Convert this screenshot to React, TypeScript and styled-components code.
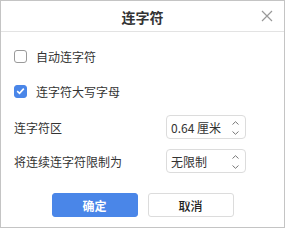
import * as React from 'react';
import styled, { createGlobalStyle } from 'styled-components';

const GlobalStyle = createGlobalStyle`
	html, body {
		margin: 0;
		padding: 0;
		background: #ffffff;
	}
	* {
		box-sizing: border-box;
	}
`;

const Dialog = styled.div`
	width: 285px;
	height: 228px;
	border: 1px solid #c4c4c4;
	background: #fff;
	display: flex;
	flex-direction: column;
	font-family: 'Noto Sans CJK SC', 'Noto Sans', sans-serif;
	color: #333;
`;

const Header = styled.div`
	position: relative;
	height: 31px;
	flex: none;
	display: flex;
	align-items: center;
	justify-content: center;
	border-bottom: 1px solid #e3e3e3;
`;

const Title = styled.div`
	font-size: 14px;
	font-weight: 600;
	color: #333;
	line-height: 1;
	margin-top: 1px;
`;

const CloseButton = styled.button`
	position: absolute;
	right: 10px;
	top: 8px;
	width: 14px;
	height: 14px;
	padding: 0;
	border: none;
	background: none;
	display: flex;
	align-items: center;
	justify-content: center;
`;

const Body = styled.div`
	flex: 1;
	display: flex;
	flex-direction: column;
	padding: 0 13px 0 13px;
`;

const CheckRow = styled.label<{ $top: number }>`
	display: flex;
	align-items: center;
	gap: 9px;
	margin-top: ${p => p.$top}px;
	height: 14px;
	font-size: 12px;
	color: #333;
`;

const Box = styled.span<{ $checked?: boolean }>`
	width: 13px;
	height: 13px;
	border-radius: 3px;
	flex: none;
	border: 1px solid ${p => (p.$checked ? '#4a86e8' : '#9a9a9a')};
	background: ${p => (p.$checked ? '#4a86e8' : '#fff')};
	display: flex;
	align-items: center;
	justify-content: center;
`;

const FieldRow = styled.div<{ $top: number }>`
	display: flex;
	align-items: center;
	justify-content: space-between;
	margin-top: ${p => p.$top}px;
	padding-right: 25px;
`;

const FieldLabel = styled.span`
	font-size: 12px;
	color: #333;
`;

const Spin = styled.div`
	width: 80px;
	height: 24px;
	border: 1px solid #dcdcdc;
	border-radius: 4px;
	display: flex;
	align-items: center;
	justify-content: space-between;
	padding: 0 6px 0 4px;
	font-size: 12px;
	color: #333;
`;

const Arrows = styled.span`
	display: flex;
	flex-direction: column;
	gap: 6px;
	margin-top: 1px;
`;

const Footer = styled.div`
	display: flex;
	justify-content: center;
	gap: 10px;
	margin-top: 20px;
`;

const Button = styled.button<{ $primary?: boolean }>`
	width: 86px;
	height: 24px;
	border-radius: 3px;
	font-family: 'Noto Sans CJK SC', 'Noto Sans', sans-serif;
	font-size: 12px;
	font-weight: ${p => (p.$primary ? 600 : 500)};
	color: ${p => (p.$primary ? '#fff' : '#222')};
	background: ${p => (p.$primary ? '#4a86e8' : '#fff')};
	border: 1px solid ${p => (p.$primary ? '#4a86e8' : '#dcdcdc')};
	padding: 0;
`;

const Chevrons = () => (
	<Arrows>
		<svg width="7" height="4" viewBox="0 0 7 4">
			<path d="M0.5 3.5 L3.5 0.7 L6.5 3.5" fill="none" stroke="#777" strokeWidth="1" />
		</svg>
		<svg width="7" height="4" viewBox="0 0 7 4">
			<path d="M0.5 0.5 L3.5 3.3 L6.5 0.5" fill="none" stroke="#777" strokeWidth="1" />
		</svg>
	</Arrows>
);

const App: React.FC = () => {
	return (
		<>
			<GlobalStyle />
			<Dialog>
				<Header>
					<Title>连字符</Title>
					<CloseButton>
						<svg width="12" height="12" viewBox="0 0 12 12">
							<path d="M1 1 L11 11 M11 1 L1 11" stroke="#999" strokeWidth="1.2" />
						</svg>
					</CloseButton>
				</Header>
				<Body>
					<CheckRow $top={17}>
						<Box />
						自动连字符
					</CheckRow>
					<CheckRow $top={21}>
						<Box $checked>
							<svg width="9" height="8" viewBox="0 0 9 8">
								<path d="M1.2 4.2 L3.5 6.3 L7.8 1.6" fill="none" stroke="#fff" strokeWidth="1.6" />
							</svg>
						</Box>
						连字符大写字母
					</CheckRow>
					<FieldRow $top={17}>
						<FieldLabel>连字符区</FieldLabel>
						<Spin>
							<span>0.64 厘米</span>
							<Chevrons />
						</Spin>
					</FieldRow>
					<FieldRow $top={10}>
						<FieldLabel>将连续连字符限制为</FieldLabel>
						<Spin>
							<span>无限制</span>
							<Chevrons />
						</Spin>
					</FieldRow>
					<Footer>
						<Button $primary>确定</Button>
						<Button>取消</Button>
					</Footer>
				</Body>
			</Dialog>
		</>
	);
};

export default App;
